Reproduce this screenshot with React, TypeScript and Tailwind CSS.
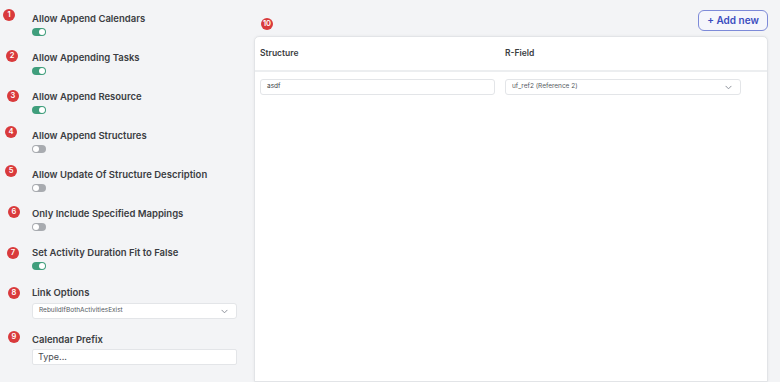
import React from "react";

const font = { fontFamily: "Inter, 'Noto Sans', sans-serif" };

type Badge = { n: number; x: number; y: number };

const badges: Badge[] = [
  { n: 1, x: 9, y: 15 },
  { n: 2, x: 12, y: 56 },
  { n: 3, x: 13, y: 96 },
  { n: 4, x: 11, y: 132 },
  { n: 5, x: 11, y: 171 },
  { n: 6, x: 14, y: 212 },
  { n: 7, x: 13, y: 253 },
  { n: 8, x: 14, y: 293 },
  { n: 9, x: 14, y: 337 },
  { n: 10, x: 267, y: 24 },
];

const toggles = [
  { label: "Allow Append Calendars", on: true },
  { label: "Allow Appending Tasks", on: true },
  { label: "Allow Append Resource", on: true },
  { label: "Allow Append Structures", on: false },
  { label: "Allow Update Of Structure Description", on: false },
  { label: "Only Include Specified Mappings", on: false },
  { label: "Set Activity Duration Fit to False", on: true },
];

function Toggle({ on }: { on: boolean }) {
  return (
    <div
      className={`w-[14px] h-[8px] rounded-full flex items-center px-[1px] ${
        on ? "bg-[#3f9e7c] justify-end" : "bg-[#a8abb0] justify-start"
      }`}
    >
      <div className="w-[6px] h-[6px] rounded-full bg-white" />
    </div>
  );
}

function Chevron() {
  return (
    <svg width="7" height="5" viewBox="0 0 8 5" fill="none">
      <path d="M1 1l3 3 3-3" stroke="#8a8f98" strokeWidth="1.1" strokeLinecap="round" strokeLinejoin="round" />
    </svg>
  );
}

function SelectBox({ value, className = "" }: { value: string; className?: string }) {
  return (
    <div
      className={`h-[16px] bg-white border border-[#e3e5e8] rounded-[3px] flex items-center justify-between pl-[6px] pr-[8px] ${className}`}
    >
      <span className="text-[6.5px] text-[#555a62]">{value}</span>
      <Chevron />
    </div>
  );
}

export default function App() {
  return (
    <div className="relative w-full h-[382px] overflow-hidden bg-[#f3f4f6] flex" style={font}>
      {/* Left settings column */}
      <div className="w-[254px] shrink-0 pl-[32px] pr-[16px] pt-[12px] flex flex-col">
        <div className="flex flex-col gap-[15px]">
          {toggles.map((t) => (
            <div key={t.label} className="flex flex-col gap-[3px]">
              <div className="text-[9.5px] leading-[13px] font-semibold text-[#3b3d42]">{t.label}</div>
              <Toggle on={t.on} />
            </div>
          ))}
        </div>
        <div className="mt-[16px] flex flex-col gap-[4px]">
          <div className="text-[9.5px] leading-[13px] font-semibold text-[#3b3d42]">Link Options</div>
          <SelectBox value="RebuildIfBothActivitiesExist" className="w-[205px]" />
        </div>
        <div className="mt-[14px] flex flex-col gap-[3px]">
          <div className="text-[9.5px] leading-[13px] font-semibold text-[#3b3d42]">Calendar Prefix</div>
          <div className="w-[205px] h-[16px] bg-white border border-[#e3e5e8] rounded-[2px] flex items-center pl-[5px]">
            <span className="text-[9px] text-[#4a4d52]">Type...</span>
          </div>
        </div>
      </div>

      {/* Right mapping table */}
      <div className="flex-1 pr-[12px] pt-[10px] flex flex-col">
        <button className="self-end w-[70px] h-[21px] rounded-[6px] border border-[#7d8ad8] bg-[#f5f6fb] text-[10px] font-semibold text-[#3a4cbf] flex items-center justify-center">
          + Add new
        </button>
        <div className="mt-[5px] flex-1 bg-white border border-[#e2e4e7] rounded-t-[5px] shadow-[0_0_3px_rgba(0,0,0,0.06)]">
          <div className="h-[35px] border-b-2 border-[#eceef0] grid grid-cols-[235px_236px] gap-[10px] px-[5px] items-center">
            <div className="text-[8.5px] font-semibold text-[#3b3d42]">Structure</div>
            <div className="text-[8.5px] font-semibold text-[#3b3d42]">R-Field</div>
          </div>
          <div className="grid grid-cols-[235px_236px] gap-[10px] px-[5px] pt-[7px]">
            <div className="h-[16px] bg-white border border-[#e3e5e8] rounded-[3px] flex items-center pl-[6px]">
              <span className="text-[6.5px] text-[#3b3d42]">asdf</span>
            </div>
            <SelectBox value="uf_ref2 (Reference 2)" />
          </div>
        </div>
      </div>

      {/* Annotation badges */}
      {badges.map((b) => (
        <div
          key={b.n}
          className="absolute w-[12px] h-[12px] -ml-[6px] -mt-[6px] rounded-full bg-[#d93a3c] flex items-center justify-center text-white text-[7.5px] font-semibold leading-none"
          style={{ left: b.x, top: b.y }}
        >
          {b.n}
        </div>
      ))}
    </div>
  );
}
